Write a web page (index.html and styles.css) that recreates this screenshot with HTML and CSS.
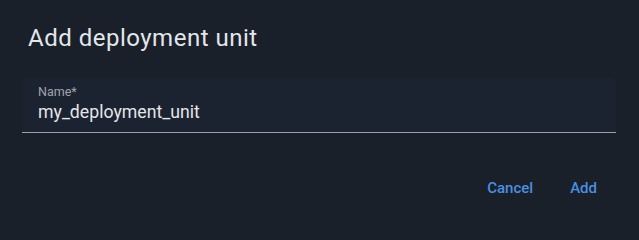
FILE: index.html
```html
<!DOCTYPE html>
<html lang="en">
<head>
<meta charset="utf-8">
<title>Add deployment unit</title>
<link rel="stylesheet" href="styles.css">
</head>
<body>
<div class="dialog">
  <h2 class="title">Add deployment unit</h2>
  <div class="content">
    <div class="field">
      <label class="label" for="name">Name*</label>
      <input class="input" id="name" type="text" value="my_deployment_unit">
    </div>
  </div>
  <div class="actions">
    <button class="btn">Cancel</button>
    <button class="btn">Add</button>
  </div>
</div>
</body>
</html>
```

FILE: styles.css
```css
html, body {
  margin: 0;
  padding: 0;
  background: #19202a;
}
.dialog {
  width: 639px;
  height: 221px;
  box-sizing: border-box;
  font-family: Roboto, "Liberation Sans", sans-serif;
  display: flex;
  flex-direction: column;
}
.title {
  margin: 0;
  padding: 24px 28px 0 28px;
  font-size: 24px;
  letter-spacing: 0.5px;
  font-weight: 400;
  line-height: 28px;
  color: #e3e6ea;
  height: 54px;
  box-sizing: border-box;
}
.content {
  padding: 24px 23px 0 22px;
}
.field {
  background: #1c2330;
  border-bottom: 1px solid #9aa0a8;
  height: 55px;
  box-sizing: border-box;
  padding: 5.5px 16px 0 16px;
  display: flex;
  flex-direction: column;
  border-radius: 4px 4px 0 0;
}
.label {
  font-size: 12.5px;
  line-height: 16px;
  color: #a0a5ad;
}
.input {
  background: transparent;
  border: none;
  outline: none;
  padding: 0;
  margin: 0;
  font-family: Roboto, "Liberation Sans", sans-serif;
  font-size: 17.7px;
  line-height: 24px;
  height: 24px;
  color: #e3e6ea;
}
.actions {
  display: flex;
  justify-content: flex-end;
  gap: 5px;
  padding: 37px 26px 0 0;
}
.btn {
  background: transparent;
  border: none;
  font-family: Roboto, "Liberation Sans", sans-serif;
  font-size: 15px;
  font-weight: 500;
  color: #4a8fe0;
  padding: 6px 16px;
  line-height: 24px;
  cursor: pointer;
}
```
